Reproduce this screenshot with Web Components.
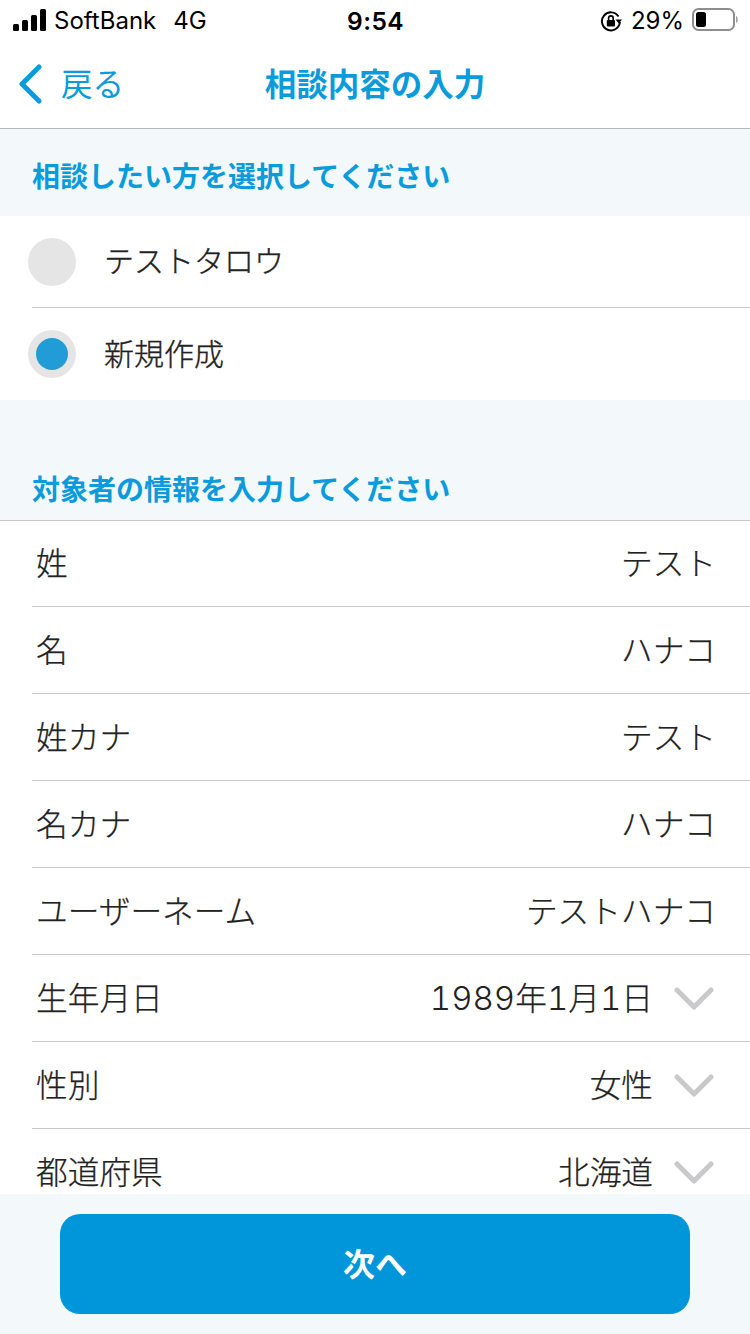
<!DOCTYPE html>
<html lang="ja"><head><meta charset="utf-8">
<style>
html,body{margin:0;padding:0;background:#f3f8fb}
body{width:750px;height:1334px;overflow:hidden;font-family:"Noto Sans CJK JP","Noto Sans",sans-serif;display:flex;flex-direction:column}
</style></head><body>
<app-status></app-status>
<app-nav back="戻る" title-text="相談内容の入力"></app-nav>
<app-scroll>
  <sec-head>相談したい方を選択してください</sec-head>
  <radio-list>
    <radio-row>テストタロウ</radio-row>
    <radio-row selected>新規作成</radio-row>
  </radio-list>
  <sec-head spaced>対象者の情報を入力してください</sec-head>
  <form-list>
    <form-row label="姓" value="テスト"></form-row>
    <form-row label="名" value="ハナコ"></form-row>
    <form-row label="姓カナ" value="テスト"></form-row>
    <form-row label="名カナ" value="ハナコ"></form-row>
    <form-row label="ユーザーネーム" value="テストハナコ"></form-row>
    <form-row label="生年月日" value="1989年1月1日" select></form-row>
    <form-row label="性別" value="女性" select></form-row>
    <form-row label="都道府県" value="北海道" select></form-row>
  </form-list>
</app-scroll>
<app-footer>次へ</app-footer>
<script>
function def(name, html){
  customElements.define(name, class extends HTMLElement{
    constructor(){super();this.attachShadow({mode:'open'});}
    connectedCallback(){this.shadowRoot.innerHTML = typeof html==='function'?html(this):html;}
  });
}
def('app-status',`<style>
:host{display:flex;align-items:center;height:40px;flex:none;background:#fff;padding:2px 12px 0 13px;position:relative;color:#000;font:400 24px/38px Inter,"Liberation Sans",sans-serif;box-sizing:border-box}
.l{display:flex;align-items:center;gap:8px;flex:1}
.t{font-weight:600;font-size:24.500px;position:absolute;left:1px;right:0;text-align:center;letter-spacing:.4px}
.r{display:flex;align-items:center;gap:9px}
svg{display:block}
.net{margin-left:9px}
.sig{margin-bottom:2px;margin-right:-1px}
.bat{margin-left:-1px;margin-bottom:2px}
</style>
<div class="l"><svg class="sig" width="34" height="22" viewBox="0 0 34 22"><rect x="0" y="15" width="6" height="7" rx="1.500"/><rect x="9" y="11" width="6" height="11" rx="1.500"/><rect x="18" y="6" width="6" height="16" rx="1.500"/><rect x="27" y="0" width="6" height="22" rx="1.500"/></svg><span>SoftBank</span><span class="net">4G</span></div>
<div class="t">9:54</div>
<div class="r"><svg class="rot" width="22" height="22" viewBox="0 0 22 22"><path d="M18.500 6.500A9 9 0 1 0 19.900 12" fill="none" stroke="#000" stroke-width="2"/><path d="M16 8.500h6.500l-3.200 4z" transform="translate(-.5 1)"/><rect x="6.800" y="10" width="8.200" height="6.400" rx="1"/><path d="M8.600 10V8.200a2.300 2.300 0 0 1 4.600 0V10" fill="none" stroke="#000" stroke-width="1.600"/></svg><span>29%</span>
<svg class="bat" width="46" height="24" viewBox="0 0 46 24"><rect x="1" y="1" width="41" height="21" rx="5.500" fill="none" stroke="#8e8e8e" stroke-width="2"/><rect x="4" y="4" width="10" height="15" rx="2.500"/><path d="M44 8v7a3 3 0 0 0 1.500-3.500a3 3 0 0 0-1.500-3.500z" fill="#a0a0a0"/></svg></div>`);
def('app-nav',h=>`<style>
:host{display:flex;align-items:center;justify-content:center;flex:none;height:89px;background:#fff;border-bottom:1px solid #b3b8bd;box-sizing:border-box;position:relative;color:#0a9bdc;padding-bottom:4px}
.b{position:absolute;left:18px;top:50%;margin-top:-22px;display:flex;align-items:center;gap:18px;font-size:31.500px;line-height:40px;font-weight:400}
.b span{padding-bottom:3px}
svg{display:block}
h1{margin:0;font-size:31.500px;font-weight:700;line-height:40px;color:#0a9bdc}
</style><div class="b"><svg width="25" height="40" viewBox="0 0 25 40"><path d="M21 3 4 20l17 17" fill="none" stroke="#0a9bdc" stroke-width="5" stroke-linecap="round" stroke-linejoin="round"/></svg><span>${h.getAttribute('back')}</span></div><h1>${h.getAttribute('title-text')}</h1>`);
def('app-scroll',`<style>:host{display:block;flex:1;min-height:0;overflow:hidden;background:#f3f8fb}</style><slot></slot>`);
def('sec-head',h=>`<style>
:host{display:flex;align-items:flex-end;height:${h.hasAttribute('spaced')?120:87}px;box-sizing:border-box;padding:0 0 ${h.hasAttribute('spaced')?12:21}px 32px;color:#0a9bdc;font-size:28px;line-height:40px;font-weight:700}
</style><slot></slot>`);
def('radio-list',`<style>:host{display:block;background:#fff}</style><slot></slot>`);
def('radio-row',h=>`<style>
:host{display:flex;align-items:center;height:92px;box-sizing:border-box;margin-left:32px;font-size:30px;font-weight:300;color:#222;-webkit-text-stroke:.35px #222}
:host(:not(:last-child)){border-bottom:1px solid #c8c8c8}
.c{width:48px;height:48px;border-radius:50%;background:#e5e5e5;margin-left:-4px;margin-right:28px;display:flex;align-items:center;justify-content:center;flex:none}
.d{width:32px;height:32px;border-radius:50%;background:#219cd6}
.x{padding-bottom:5px}
</style><div class="c">${h.hasAttribute('selected')?'<div class="d"></div>':''}</div><div class="x"><slot></slot></div>`);
def('form-list',`<style>:host{display:block;background:#fff;border-top:1px solid #c8c8c8}::slotted(:first-child){height:86px}</style><slot></slot>`);
def('form-row',h=>{
  const v=h.getAttribute('value').replace(/\d+/g,'<span class="n">$&</span>');
  const sel=h.hasAttribute('select');
  return `<style>
:host{display:flex;align-items:center;height:87px;box-sizing:border-box;margin-left:32px;padding:0 ${sel?36:34}px 0 4px;border-bottom:1px solid #c8c8c8;font-size:31.700px;font-weight:300;color:#222;-webkit-text-stroke:.25px #222}
.l{flex:1;padding-bottom:5px}
.v{padding-bottom:5px}
.n{font-family:Inter,sans-serif;font-size:33px;font-weight:300;font-variant-numeric:tabular-nums;-webkit-text-stroke:0}
svg{display:block;margin-left:21px;margin-top:2px;flex:none}
</style><span class="l">${h.getAttribute('label')}</span><span class="v">${v}</span>${sel?'<svg width="40" height="24" viewBox="0 0 40 24"><path d="M3 3l17 17L37 3" fill="none" stroke="#c9c9cb" stroke-width="5" stroke-linecap="round" stroke-linejoin="round"/></svg>':''}`;
});
def('app-footer',`<style>
:host{display:flex;flex:none;height:140px;box-sizing:border-box;padding:20px 60px;background:#f3f8fb}
.btn{flex:1;background:#0096d9;border-radius:20px;color:#fff;display:flex;align-items:center;justify-content:center;font-size:32px;font-weight:700;padding-bottom:4px;box-sizing:border-box}
</style><div class="btn"><slot></slot></div>`);
</script>
</body></html>
